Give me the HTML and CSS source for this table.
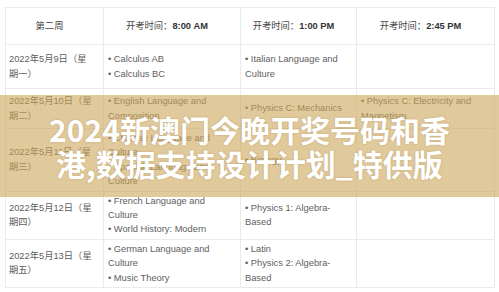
FILE: index.html
```html
<!DOCTYPE html>
<html lang="zh">
<head>
<meta charset="utf-8">
<title>第二周</title>
<link rel="stylesheet" href="styles.css">
</head>
<body>
<div class="page">
  <table class="schedule">
    <colgroup>
      <col class="c1"><col class="c2"><col class="c3"><col class="c4">
    </colgroup>
    <thead>
      <tr class="head">
        <th>第二周</th>
        <th>开考时间：<b>8:00 AM</b></th>
        <th>开考时间：<b>1:00 PM</b></th>
        <th>开考时间：<b>2:45 PM</b></th>
      </tr>
    </thead>
    <tbody>
      <tr class="r1">
        <td class="date">2022年5月9日（星期一）</td>
        <td><ul><li>Calculus AB</li><li>Calculus BC</li></ul></td>
        <td><ul><li>Italian Language and Culture</li></ul></td>
        <td></td>
      </tr>
      <tr class="r2">
        <td class="date">2022年5月10日（星期二）</td>
        <td><ul><li>English Language and Composition</li></ul></td>
        <td><ul><li>Physics C: Mechanics</li></ul></td>
        <td><ul><li>Physics C: Electricity and Magnetism</li></ul></td>
      </tr>
      <tr class="r3">
        <td class="date">2022年5月11日（星期三）</td>
        <td><ul><li>Chinese Language and Culture</li><li>Spanish Language and Culture</li></ul></td>
        <td><ul><li>Biology</li></ul></td>
        <td></td>
      </tr>
      <tr class="r4">
        <td class="date">2022年5月12日（星期四）</td>
        <td><ul><li>French Language and Culture</li><li>World History: Modern</li></ul></td>
        <td><ul><li>Physics 1: Algebra-Based</li></ul></td>
        <td></td>
      </tr>
      <tr class="r5">
        <td class="date">2022年5月13日（星期五）</td>
        <td><ul><li>German Language and Culture</li><li>Music Theory</li></ul></td>
        <td><ul><li>Latin</li><li>Physics 2: Algebra-Based</li></ul></td>
        <td></td>
      </tr>
    </tbody>
  </table>
  <div class="banner">
    <p class="banner-title">2024新澳门今晚开奖号码和香港,数据支持设计计划_特供版</p>
  </div>
</div>
</body>
</html>
```

FILE: styles.css
```css
html, body {
  margin: 0;
  padding: 0;
  background: #ffffff;
}

.page {
  position: relative;
  width: 499px;
  height: 292px;
  overflow: hidden;
  padding: 7px 5px 0 5px;
  box-sizing: border-box;
  font-family: "Liberation Sans", Arial, "Noto Sans CJK SC", sans-serif;
}

.schedule {
  width: 489px;
  table-layout: fixed;
  border-collapse: collapse;
  font-size: 9.3px;
  line-height: 14.4px;
  color: #5e5e5e;
}

.c1 { width: 98px; }
.c2 { width: 137px; }
.c3 { width: 116px; }
.c4 { width: 138px; }

.schedule th,
.schedule td {
  border: 1px solid #ebebeb;
  padding: 2px 9px 2px 3px;
  vertical-align: middle;
  text-align: left;
}

.schedule th {
  height: 37px;
  box-sizing: border-box;
  text-align: center;
  font-weight: normal;
  color: #444;
  padding: 0 10px 0 0;
}

.schedule th b {
  font-weight: bold;
  color: #333;
}

.schedule td + td {
  padding-left: 4px;
}

.date {
  font-family: "Liberation Sans", Arial, "Noto Sans CJK SC", sans-serif;
}

.schedule ul {
  list-style: none;
  margin: 0;
  padding: 0;
}

.schedule li::before {
  content: "\2022\00a0";
}

.r1 { height: 44px; }
.r2 { height: 40px; }
.r3 { height: 62px; }
.r4 { height: 48px; }
.r5 { height: 45px; }

.banner {
  position: absolute;
  left: 0;
  top: 95px;
  width: 499px;
  height: 102px;
  background: rgba(203, 165, 88, 0.6);
  display: flex;
  align-items: center;
  justify-content: center;
}

.banner-title {
  margin: 0;
  width: 410px;
  text-align: center;
  color: #ffffff;
  font-family: "Noto Sans CJK SC", sans-serif;
  font-weight: bold;
  font-size: 30px;
  line-height: 34px;
  text-shadow: 0 0 2px rgba(120, 90, 40, 0.35);
}
```
